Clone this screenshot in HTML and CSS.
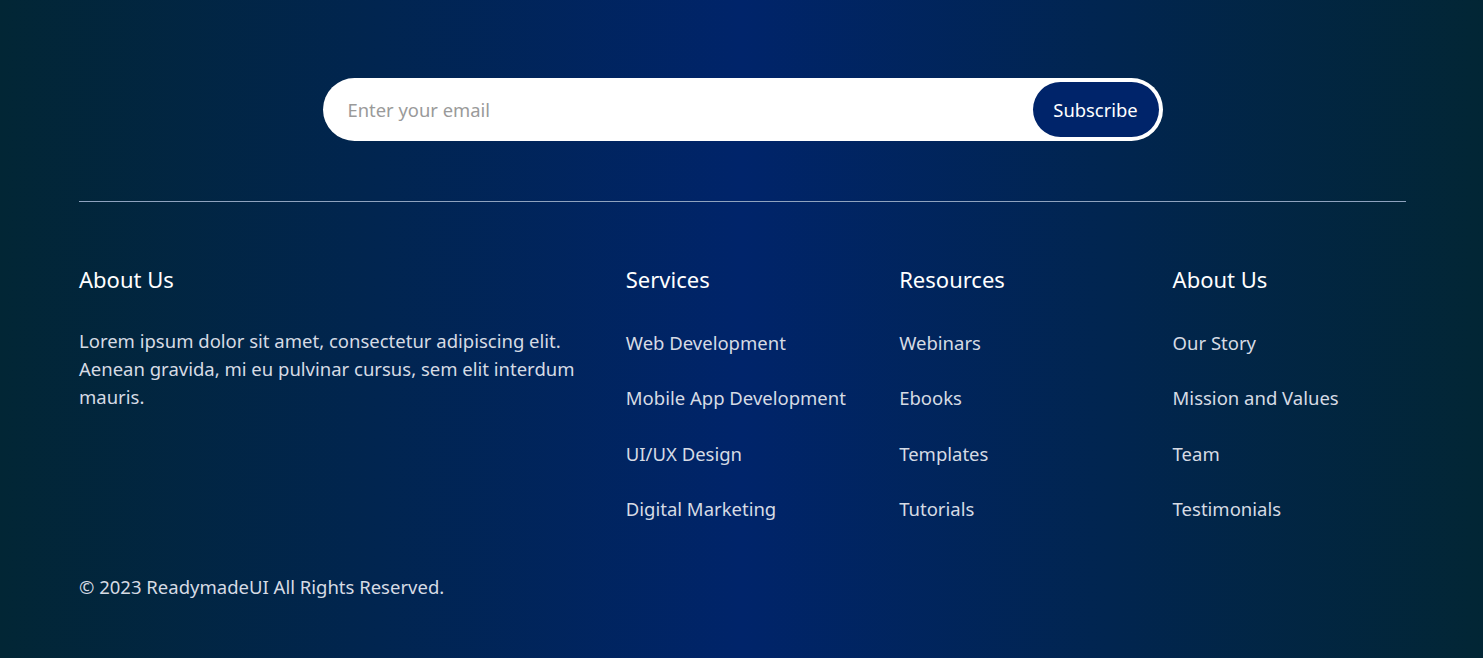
FILE: index.html
```html
<!DOCTYPE html>
<html lang="en">
<head>
<meta charset="utf-8">
<title>Footer</title>
<link rel="stylesheet" href="styles.css">
</head>
<body>
<footer class="footer">
  <form class="subscribe" onsubmit="return false">
    <input class="subscribe-input" type="email" placeholder="Enter your email">
    <button class="subscribe-btn" type="submit">Subscribe</button>
  </form>
  <hr class="divider">
  <div class="columns">
    <div class="col col-about">
      <h4 class="col-title">About Us</h4>
      <p class="about-text">Lorem ipsum dolor sit amet, consectetur adipiscing elit. Aenean gravida, mi eu pulvinar cursus, sem elit interdum mauris.</p>
    </div>
    <div class="col">
      <h4 class="col-title">Services</h4>
      <ul class="links">
        <li><a href="#">Web Development</a></li>
        <li><a href="#">Mobile App Development</a></li>
        <li><a href="#">UI/UX Design</a></li>
        <li><a href="#">Digital Marketing</a></li>
      </ul>
    </div>
    <div class="col">
      <h4 class="col-title">Resources</h4>
      <ul class="links">
        <li><a href="#">Webinars</a></li>
        <li><a href="#">Ebooks</a></li>
        <li><a href="#">Templates</a></li>
        <li><a href="#">Tutorials</a></li>
      </ul>
    </div>
    <div class="col">
      <h4 class="col-title">About Us</h4>
      <ul class="links">
        <li><a href="#">Our Story</a></li>
        <li><a href="#">Mission and Values</a></li>
        <li><a href="#">Team</a></li>
        <li><a href="#">Testimonials</a></li>
      </ul>
    </div>
  </div>
  <p class="copyright">© 2023 ReadymadeUI All Rights Reserved.</p>
</footer>
</body>
</html>
```
FILE: styles.css
```css
* { box-sizing: border-box; }
html, body { margin: 0; padding: 0; }
body {
  font-family: "Noto Sans", "Open Sans", sans-serif;
  background: #00202e;
}
.footer {
  min-height: 658px;
  background: linear-gradient(to right, #022635 0%, #00246a 50%, #022635 100%);
  padding: 78px 77px 40px 79px;
}
.subscribe {
  width: 840px;
  height: 63px;
  margin: 0 auto;
  background: #fff;
  border-radius: 999px;
  display: flex;
  align-items: center;
  padding: 4px 4px 4px 25px;
}
.subscribe-input {
  flex: 1;
  border: none;
  outline: none;
  background: transparent;
  font-family: inherit;
  font-size: 18.4px;
  color: #333;
  padding: 0;
}
.subscribe-input::placeholder { color: #9a9a9a; }
.subscribe-btn {
  height: 55px;
  width: 126px;
  border: none;
  border-radius: 999px;
  background: #00246a;
  color: #fff;
  font-family: inherit;
  font-size: 18.4px;
  cursor: pointer;
  padding: 0;
}
.divider {
  border: none;
  border-top: 1px solid #8fa3bf;
  margin: 60px 0 0;
}
.columns {
  display: grid;
  grid-template-columns: repeat(5, 1fr);
  column-gap: 40px;
  margin-top: 61px;
}
.col-about { grid-column: span 2; }
.col-title {
  margin: 0;
  font-size: 22px;
  font-weight: 400;
  line-height: 32px;
  color: #fff;
}
.about-text {
  margin: 32px 0 0;
  font-size: 18.5px;
  line-height: 28px;
  color: #d6dbe4;
}
.links {
  list-style: none;
  margin: 34px 0 0;
  padding: 0;
  display: flex;
  flex-direction: column;
  gap: 27.3px;
}
.links a {
  display: block;
  line-height: 28px;
  color: #d6dbe4;
  text-decoration: none;
  font-size: 18.5px;
}
.copyright {
  margin: 50px 0 0;
  font-size: 18.5px;
  line-height: 28px;
  color: #d6dbe4;
}
```
